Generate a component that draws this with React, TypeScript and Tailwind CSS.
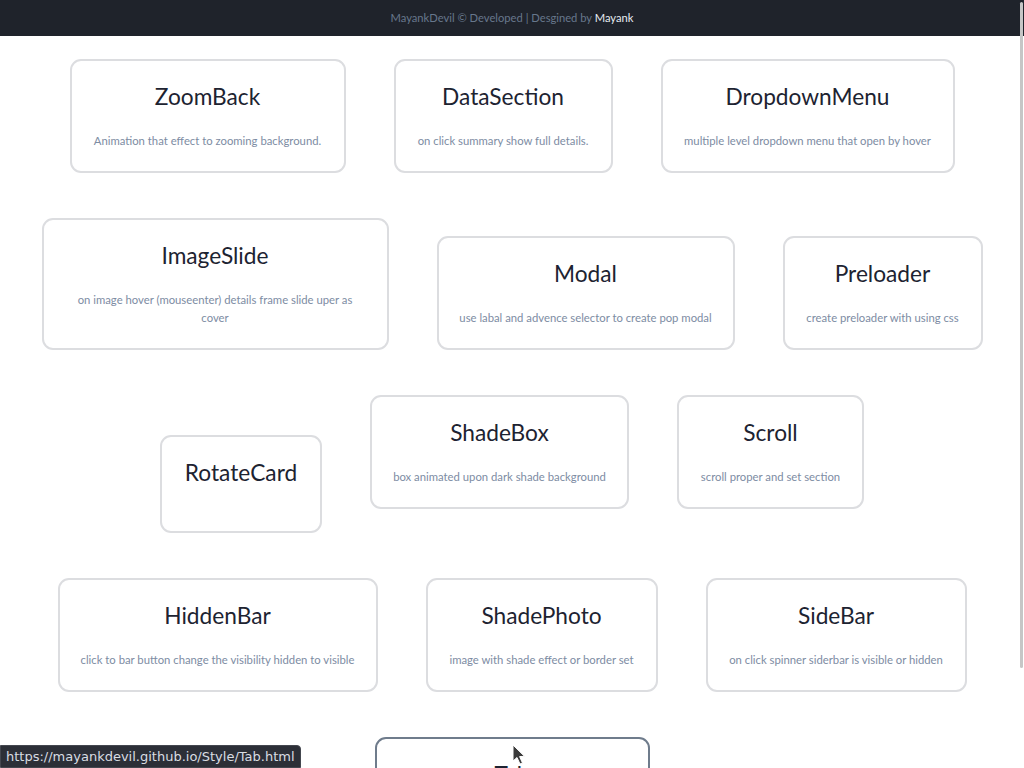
import React from "react";

type Card = { title: string; desc?: string; w: number; hover?: boolean; wrap?: boolean };

const cards: Card[] = [
  { title: "ZoomBack", desc: "Animation that effect to zooming background.", w: 276 },
  { title: "DataSection", desc: "on click summary show full details.", w: 219 },
  { title: "DropdownMenu", desc: "multiple level dropdown menu that open by hover", w: 294 },
  { title: "ImageSlide", desc: "on image hover (mouseenter) details frame slide uper as cover", w: 347, wrap: true },
  { title: "Modal", desc: "use labal and advence selector to create pop modal", w: 298 },
  { title: "Preloader", desc: "create preloader with using css", w: 200 },
  { title: "RotateCard", w: 162 },
  { title: "ShadeBox", desc: "box animated upon dark shade background", w: 259 },
  { title: "Scroll", desc: "scroll proper and set section", w: 187 },
  { title: "HiddenBar", desc: "click to bar button change the visibility hidden to visible", w: 320 },
  { title: "ShadePhoto", desc: "image with shade effect or border set", w: 232 },
  { title: "SideBar", desc: "on click spinner siderbar is visible or hidden", w: 261 },
  { title: "Tab", desc: "tab switching content with radio button", w: 275, hover: true },
];

const font = { fontFamily: "Lato, 'Noto Sans', sans-serif" };

export default function App() {
  return (
    <div className="relative h-screen w-full overflow-hidden bg-white" style={font}>
      <header className="flex h-9 w-full items-center justify-center bg-[#1f232b] text-[11.2px] text-[#67778c]">
        <span>
          MayankDevil © Developed | Desgined by <span className="text-[#e6ecf2]">Mayank</span>
        </span>
      </header>
      <main className="block text-center text-[0px] leading-[0px]">
        {cards.map((c) => (
          <div
            key={c.title}
            style={{ width: c.w }}
            className={
              "mx-6 my-[22.5px] box-border inline-block rounded-[11px] border-2 bg-white px-[20px] pt-[21px] pb-[21px] text-center align-baseline " +
              (c.hover ? "border-[#6f7c8c]" : "border-[#dcdde0]")
            }
          >
            <h2 className="text-[22.7px] leading-[29px] font-normal text-[#1d2331]">{c.title}</h2>
            {c.desc ? (
              <p
                className={
                  "mt-[21px] text-[11.3px] leading-[18px] text-[#7d8ca3] " +
                  (c.wrap ? "px-[2px]" : "whitespace-nowrap")
                }
              >
                {c.desc}
              </p>
            ) : (
              <div className="h-[23px]" />
            )}
          </div>
        ))}
      </main>

      {/* overlay scrollbar */}
      <div className="absolute top-[2px] right-[1px] h-[666px] w-[3px] rounded-full bg-[#c6c6c6]" />

      {/* cursor */}
      <svg className="absolute left-[512px] top-[744px]" width="14" height="22" viewBox="0 0 14 22">
        <path d="M1 1 L1 17 L5 13.5 L8 20 L10.5 19 L7.6 12.6 L12.5 12.3 Z" fill="#3b3b3b" stroke="#ffffff" strokeWidth="1" />
      </svg>

      {/* status bubble */}
      <div
        className="absolute bottom-0 left-0 flex h-[23px] items-center rounded-tr-[4px] border border-[#44474f] bg-[#2c2f37] px-[5px] text-[#d9dde3]"
        style={{ fontFamily: "'DejaVu Sans', 'Noto Sans', sans-serif", fontSize: 13 }}
      >
        https://mayankdevil.github.io/Style/Tab.html
      </div>
    </div>
  );
}
